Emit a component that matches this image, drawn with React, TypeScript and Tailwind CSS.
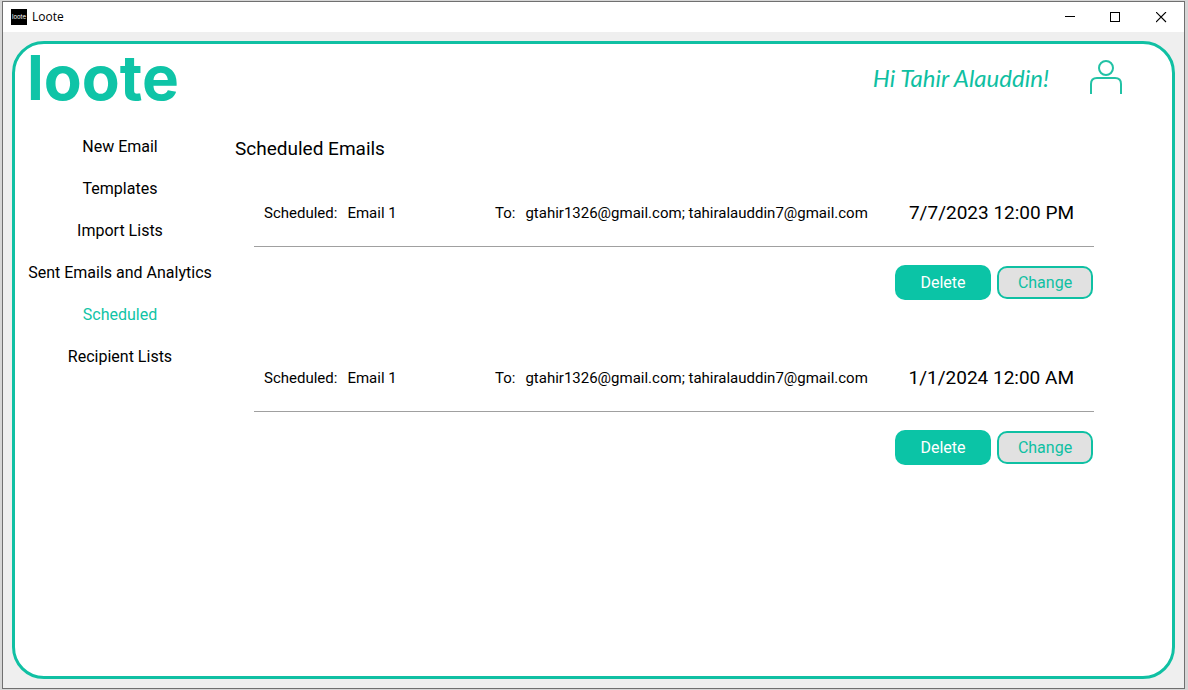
import React from "react";

type ScheduledEmail = { id: number; name: string; to: string; date: string };

const navItems = [
  "New Email",
  "Templates",
  "Import Lists",
  "Sent Emails and Analytics",
  "Scheduled",
  "Recipient Lists",
];

const emails: ScheduledEmail[] = [
  { id: 1, name: "Email 1", to: "gtahir1326@gmail.com; tahiralauddin7@gmail.com", date: "7/7/2023 12:00 PM" },
  { id: 2, name: "Email 1", to: "gtahir1326@gmail.com; tahiralauddin7@gmail.com", date: "1/1/2024 12:00 AM" },
];

function TitleBar() {
  return (
    <header className="flex h-[30px] shrink-0 items-center bg-white pl-2">
      <span className="flex size-4 items-center justify-center overflow-hidden bg-black font-['Inter'] text-[6px] leading-none text-white">
        loote
      </span>
      <span className="ml-[5px] flex-1 font-['Open_Sans',sans-serif] text-xs text-black">Loote</span>
      <button aria-label="Minimize" className="flex h-full w-[46px] items-center justify-center">
        <svg width="11" height="11" shapeRendering="crispEdges">
          <path d="M1 4.5H11" stroke="#000" />
        </svg>
      </button>
      <button aria-label="Maximize" className="flex h-full w-[46px] items-center justify-center">
        <svg width="11" height="11" shapeRendering="crispEdges">
          <rect x="0.5" y="0.5" width="9" height="9" fill="none" stroke="#000" />
        </svg>
      </button>
      <button aria-label="Close" className="flex h-full w-[46px] items-center justify-center">
        <svg width="11" height="11">
          <path d="M0 0L10 10M10 0L0 10" stroke="#000" strokeWidth="1.1" />
        </svg>
      </button>
    </header>
  );
}

function AppHeader() {
  return (
    <div className="flex h-[82px] shrink-0 items-start justify-between pr-[49px] pl-3">
      <div className="font-['Inter',sans-serif] text-[62px] leading-[68px] font-bold text-[#0fc4a7]">loote</div>
      <div className="flex items-center gap-10 pt-3">
        <p className="font-['Ink_Free','Lato',cursive] text-2xl leading-[44px] text-[#0fbfa2] italic">
          Hi Tahir Alauddin!
        </p>
        <button aria-label="Account">
          <svg width="34" height="36" viewBox="0 0 34 36" fill="none" stroke="#22c2a5" strokeWidth="2">
            <circle cx="17" cy="8" r="7" />
            <path d="M2 34V24Q2 18 8 18H26Q32 18 32 24V34" />
          </svg>
        </button>
      </div>
    </div>
  );
}

function EmailRow({ email }: { email: ScheduledEmail }) {
  return (
    <li className="pb-[43px]">
      <div className="flex h-[69px] items-center border-b border-[#a0a0a0] pt-0.5 pr-5 pl-2.5 text-[15px]">
        <div className="flex w-[231px] gap-2.5">
          <span>Scheduled:</span>
          <span>{email.name}</span>
        </div>
        <div className="flex flex-1 gap-2.5 whitespace-nowrap">
          <span>To:</span>
          <span>{email.to}</span>
        </div>
        <time className="text-[19px] whitespace-nowrap">{email.date}</time>
      </div>
      <div className="mt-[18px] flex h-[35px] items-center justify-end gap-1.5 pr-px text-base">
        <button className="h-[35px] w-24 rounded-[10px] bg-[#0bc4a6] text-white">Delete</button>
        <button className="h-[33px] w-24 rounded-[10px] border-2 border-[#0fc0a3] bg-[#e1e1e1] text-[#0fc0a3]">
          Change
        </button>
      </div>
    </li>
  );
}

export default function App() {
  return (
    <div className="flex min-h-screen bg-[#d6d6d6] pt-px pr-[3px] pb-px pl-0.5 font-['Roboto',sans-serif] text-black">
      <div className="flex flex-1 flex-col border border-[#707070] bg-[#efefef]">
        <TitleBar />
        <div className="flex flex-1 p-[9px]">
          <div className="flex flex-1 flex-col rounded-[32px] border-3 border-[#10c0a3] bg-white">
            <AppHeader />
            <div className="flex flex-1">
              <nav className="flex w-[210px] shrink-0 flex-col items-center">
                {navItems.map((item) => (
                  <a
                    key={item}
                    href="#"
                    className={
                      item === "Scheduled"
                        ? "text-base leading-[42px] text-[#10c4a6]"
                        : "text-base leading-[42px] text-black"
                    }
                  >
                    {item}
                  </a>
                ))}
              </nav>
              <main className="flex-1 pt-[7px] pr-[78px] pl-2.5">
                <h1 className="text-[19px] leading-8">Scheduled Emails</h1>
                <ul className="mt-[13px] pl-[19px]">
                  {emails.map((email) => (
                    <EmailRow key={email.id} email={email} />
                  ))}
                </ul>
              </main>
            </div>
          </div>
        </div>
      </div>
    </div>
  );
}
